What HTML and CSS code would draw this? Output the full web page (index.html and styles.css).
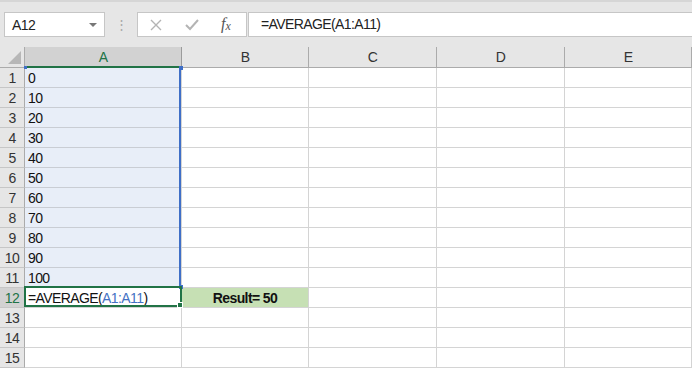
FILE: index.html
```html
<!DOCTYPE html>
<html>
<head>
<meta charset="utf-8">
<title>AVERAGE example</title>
<link rel="stylesheet" href="styles.css">
</head>
<body>
<div class="toolbar">
  <div class="namebox"><span>A12</span><span class="caret"></span></div>
  <div class="grip">&#8942;</div>
  <div class="fxbox">
    <svg class="ico" width="12" height="12" viewBox="0 0 12 12"><path d="M1 1L11 11M11 1L1 11" stroke="#b4b4b4" stroke-width="1.4" fill="none"/></svg>
    <svg class="ico ok" width="14" height="12" viewBox="0 0 14 12"><path d="M1 6L5 10L13 1" stroke="#b4b4b4" stroke-width="2" fill="none"/></svg>
    <span class="fx">f<sub>x</sub></span>
  </div>
  <div class="formula">=AVERAGE(A1:A11)</div>
</div>

<div class="sheet">
  <div class="corner"><span class="tri"></span></div>
  <div class="colhead sel">A</div>
  <div class="colhead">B</div>
  <div class="colhead">C</div>
  <div class="colhead">D</div>
  <div class="colhead">E</div>

  <div class="rowhead">1</div><div class="cell rng">0</div><div class="cell"></div><div class="cell"></div><div class="cell"></div><div class="cell"></div>
  <div class="rowhead">2</div><div class="cell rng">10</div><div class="cell"></div><div class="cell"></div><div class="cell"></div><div class="cell"></div>
  <div class="rowhead">3</div><div class="cell rng">20</div><div class="cell"></div><div class="cell"></div><div class="cell"></div><div class="cell"></div>
  <div class="rowhead">4</div><div class="cell rng">30</div><div class="cell"></div><div class="cell"></div><div class="cell"></div><div class="cell"></div>
  <div class="rowhead">5</div><div class="cell rng">40</div><div class="cell"></div><div class="cell"></div><div class="cell"></div><div class="cell"></div>
  <div class="rowhead">6</div><div class="cell rng">50</div><div class="cell"></div><div class="cell"></div><div class="cell"></div><div class="cell"></div>
  <div class="rowhead">7</div><div class="cell rng">60</div><div class="cell"></div><div class="cell"></div><div class="cell"></div><div class="cell"></div>
  <div class="rowhead">8</div><div class="cell rng">70</div><div class="cell"></div><div class="cell"></div><div class="cell"></div><div class="cell"></div>
  <div class="rowhead">9</div><div class="cell rng">80</div><div class="cell"></div><div class="cell"></div><div class="cell"></div><div class="cell"></div>
  <div class="rowhead">10</div><div class="cell rng">90</div><div class="cell"></div><div class="cell"></div><div class="cell"></div><div class="cell"></div>
  <div class="rowhead">11</div><div class="cell rng">100</div><div class="cell"></div><div class="cell"></div><div class="cell"></div><div class="cell"></div>
  <div class="rowhead sel">12</div><div class="cell">=AVERAGE(<span class="ref">A1:A11</span>)</div><div class="cell result">Result= 50</div><div class="cell"></div><div class="cell"></div><div class="cell"></div>
  <div class="rowhead">13</div><div class="cell"></div><div class="cell"></div><div class="cell"></div><div class="cell"></div><div class="cell"></div>
  <div class="rowhead">14</div><div class="cell"></div><div class="cell"></div><div class="cell"></div><div class="cell"></div><div class="cell"></div>
  <div class="rowhead">15</div><div class="cell"></div><div class="cell"></div><div class="cell"></div><div class="cell"></div><div class="cell"></div>

  <!-- selection overlays -->
  <div class="rangeline"></div>
  <div class="dot d1"></div>
  <div class="dot d2"></div>
  <div class="dot d3"></div>
  <div class="active"></div>
  <div class="handle"></div>
</div>
</body>
</html>
```

FILE: styles.css
```css
html,body{margin:0;padding:0}
body{font:14px "Liberation Sans",Arial,sans-serif;letter-spacing:-0.6px;color:#222;background:#fff;width:692px;height:368px;overflow:hidden}

.toolbar{height:47px;box-sizing:border-box;background:#e6e6e6;border-top:2px solid #d6d6d6;padding:10px 0 0 4px;display:flex;align-items:flex-start}
.namebox{width:101px;height:25px;box-sizing:border-box;background:#fff;border:1px solid #c6c6c6;display:flex;align-items:center;justify-content:space-between;padding:0 7px 0 7px;font-size:14px;color:#222}
.caret{width:0;height:0;border-left:4px solid transparent;border-right:4px solid transparent;border-top:4px solid #777}
.grip{width:32px;text-align:center;color:#a8a8a8;font-size:13px;line-height:25px}
.fxbox{width:110px;height:25px;box-sizing:border-box;background:#fff;border:1px solid #c6c6c6;display:flex;align-items:center;padding-left:12px}
.ico{margin-right:23px}
.ico.ok{margin-right:22px}
.fx{font:italic 16px "Liberation Serif",serif;color:#555;letter-spacing:0}
.fx sub{font-size:12px;vertical-align:-1px}
.formula{flex:1;height:25px;box-sizing:border-box;background:#fff;border:1px solid #c6c6c6;border-right:none;margin-left:1px;padding-left:12px;line-height:23px;font-size:14px;color:#222}

.sheet{position:relative;display:grid;grid-template-columns:25px 157px 127px 128px 128px 1fr;grid-template-rows:21px repeat(15,20px)}
.sheet > div{box-sizing:border-box}
.corner{background:#e6e6e6;border-right:1px solid #ababab;border-bottom:1px solid #ababab;position:relative}
.tri{position:absolute;right:3px;bottom:3px;width:0;height:0;border-left:13px solid transparent;border-bottom:13px solid #b7b7b7}
.colhead{background:#e6e6e6;border-right:1px solid #ababab;border-bottom:1px solid #ababab;text-align:center;font-size:14px;line-height:20px;color:#333}
.colhead.sel{background:#d2d2d2;color:#217346;border-bottom:2px solid #217346;border-right-color:#9b9b9b}
.rowhead{background:#e6e6e6;border-right:1px solid #ababab;border-bottom:1px solid #c6c6c6;text-align:center;font-size:14px;line-height:20px;color:#333}
.rowhead.sel{background:#d2d2d2;color:#217346}
.cell{border-right:1px solid #d4d4d4;border-bottom:1px solid #d4d4d4;padding-left:3px;line-height:21px;font-size:14px;color:#111;white-space:nowrap}
.cell.rng{background:#e8eef8;border-bottom-color:#c9cdd4}
.ref{color:#4472c4}
.result{background:#c6e0b4;font-weight:bold;text-align:center;padding-left:0}

.rangeline{position:absolute;left:179px;top:21px;width:2px;height:220px;background:#3f6fc7}
.dot{position:absolute;width:4px;height:4px;background:#3f6fc7}
.d1{left:24px;top:19px;width:3px;height:3px}
.d2{left:179px;top:19px}
.d3{left:179px;top:238px}
.active{position:absolute;left:24px;top:239px;width:158px;height:21px;box-sizing:border-box;border:2px solid #217346}
.handle{position:absolute;left:178px;top:256px;width:6px;height:6px;background:#217346;border:1px solid #fff;box-sizing:content-box;margin:-1px 0 0 -1px}
```
